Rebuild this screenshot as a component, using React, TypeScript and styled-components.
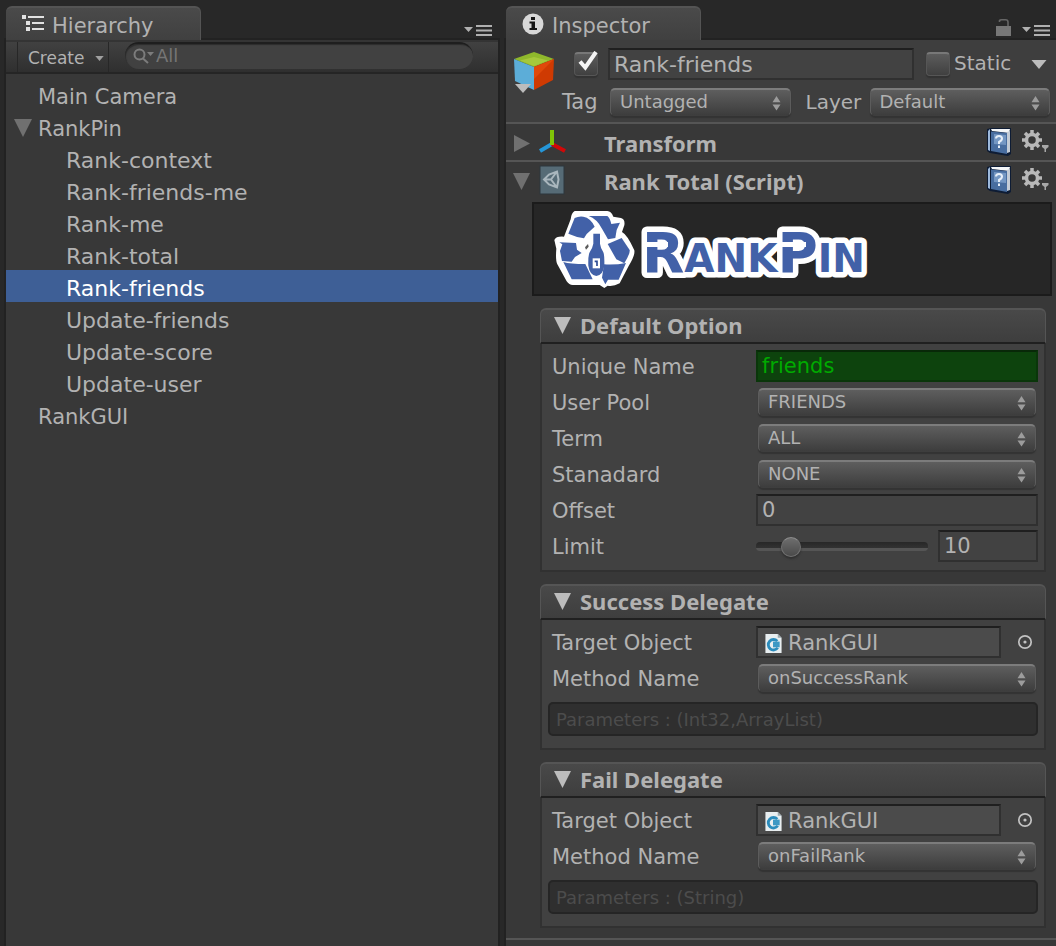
import React, { useState } from "react";
import styled, { createGlobalStyle, css } from "styled-components";

const GlobalStyle = createGlobalStyle`
  * { box-sizing: border-box; }
  body { margin: 0; background: #282828; }
  body, button, input, select {
    font-family: "DejaVu Sans", sans-serif;
    color: #b2b2b2;
  }
  button, input, select { margin: 0; padding: 0; border: 0; outline: 0; background: none; }
  svg { display: block; flex: none; }
`;

/* ---------- window and panes ---------- */

const Window = styled.div`
  display: grid;
  grid-template-columns: minmax(0, 492fr) minmax(0, 550fr);
  gap: 8px;
  min-height: 100vh;
  padding-left: 6px;
  background: #282828;
`;

const Pane = styled.section`
  display: flex;
  flex-direction: column;
  min-width: 0;
`;

const PaneBody = styled.div`
  flex: 1;
  background: #383838;
  box-shadow: 0 0 0 2px #222222;
`;

const TabBar = styled.div`
  display: flex;
  align-items: flex-end;
  justify-content: space-between;
  height: 40px;
  position: relative;
`;

const Tab = styled.button`
  display: flex;
  align-items: center;
  gap: 8px;
  width: 195px;
  height: 34px;
  padding: 4px 16px 0;
  border-top: 2px solid #545454;
  border-right: 1px solid #545454;
  border-radius: 6px 6px 0 0;
  background: linear-gradient(#4a4a4a, #404040);
  font-size: 21px;
  line-height: 24px;
  & > svg { margin-bottom: 4px; }
`;

const PaneMenu = styled.div`
  display: flex;
  align-items: flex-end;
  gap: 11px;
  padding: 0 6px 3px 0;
`;

const IconButton = styled.button`
  display: flex;
  align-items: center;
`;

/* ---------- hierarchy ---------- */

const Toolbar = styled.div`
  display: flex;
  height: 34px;
  padding: 0 25px 0 11px;
  gap: 16px;
  border-top: 2px solid #343434;
  border-bottom: 2px solid #252525;
  background: linear-gradient(#414141, #2f2f2f);
`;

const CreateButton = styled.button`
  display: flex;
  align-items: center;
  gap: 10px;
  width: 92px;
  padding: 2px 0 0 10px;
  border: solid #272727;
  border-width: 0 1px;
  font-size: 17px;
`;

const SearchBox = styled.label`
  display: flex;
  flex: 1;
  align-items: center;
  gap: 2px;
  height: 27px;
  min-width: 0;
  padding: 0 0 2px 8px;
  border-radius: 14px;
  border-top: 2px solid #1e1e1e;
  background: #414141;
  box-shadow: inset 1px 1px 1px #2c2c2c;
`;

const SearchInput = styled.input`
  flex: 1;
  min-width: 0;
  font-size: 18px;
  &::placeholder { color: #757575; opacity: 1; }
`;

const Tree = styled.ul`
  list-style: none;
  margin: 0;
  padding: 4px 0 0;
`;

const TreeRow = styled.button<{ $child?: boolean; $selected?: boolean }>`
  display: flex;
  align-items: center;
  gap: 6px;
  width: 100%;
  height: 32px;
  padding: 6px 0 0 ${(p) => (p.$child ? 60 : 8)}px;
  font-size: ${(p) => (p.$child ? 22 : 21)}px;
  line-height: 26px;
  white-space: nowrap;
  ${(p) => p.$selected && css`background: #3e5f96; color: #ffffff;`}
`;

const TreeFold = styled.span`
  width: 18px;
  padding-bottom: 3px;
`;

/* ---------- form controls ---------- */

const fieldFrame = css`
  height: 32px;
  border: 2px solid #303030;
  border-top-color: #1f1f1f;
  background: #424242;
`;

const TextField = styled.input<{ $tone?: "valid" }>`
  ${fieldFrame}
  width: 100%;
  min-width: 0;
  padding: 0 4px;
  font-size: 21px;
  ${(p) =>
    p.$tone === "valid" &&
    css`
      border-color: #0a360a;
      border-top-color: #082808;
      background: #0d430d;
      color: #00aa00;
    `}
`;

const NameField = styled(TextField)`
  flex: 1;
  width: auto;
  font-size: 22px;
`;

const NumberField = styled(TextField)`
  width: 100px;
  flex: none;
`;

const SelectFrame = styled.span`
  position: relative;
  display: block;
  flex: 1;
  min-width: 0;
  margin: 0 2px;
  & > svg { position: absolute; right: 10px; top: 8px; pointer-events: none; }
`;

const SelectBox = styled.select`
  appearance: none;
  display: block;
  width: 100%;
  height: 28px;
  padding: 0 28px 2px 9px;
  border: 1px solid #5c5c5c;
  border-top: 2px solid #7c7c7c;
  border-bottom-color: #3e3e3e;
  border-radius: 5px;
  background: linear-gradient(#5e5e5e, #3d3d3d);
  box-shadow: 0 2px 1px #333333;
  font-size: 18px;
`;

const CheckFrame = styled.span`
  position: relative;
  display: block;
  width: 24px;
  height: 24px;
  flex: none;
  & > svg { position: absolute; left: 3px; top: -1px; pointer-events: none; }
`;

const CheckInput = styled.input`
  appearance: none;
  display: block;
  width: 24px;
  height: 24px;
  border: 1px solid #565656;
  border-top: 2px solid #787878;
  border-radius: 4px;
  background: linear-gradient(#5c5c5c, #404040);
  box-shadow: 0 2px 1px #333333;
`;

const Slider = styled.input`
  appearance: none;
  flex: 1;
  min-width: 0;
  height: 24px;
  &::-webkit-slider-runnable-track {
    height: 9px;
    border-radius: 4px;
    background: linear-gradient(#272727, #323232 65%, #555555 66%);
  }
  &::-webkit-slider-thumb {
    appearance: none;
    width: 20px;
    height: 20px;
    margin-top: -5px;
    border: 1px solid #707070;
    border-top-color: #8c8c8c;
    border-radius: 50%;
    background: linear-gradient(#6e6e6e, #4a4a4a);
    box-shadow: 0 2px 2px #303030;
  }
`;

function Select({ id, options, label }: { id?: string; options: string[]; label?: string }) {
  return (
    <SelectFrame>
      <SelectBox id={id} aria-label={label}>
        {options.map((o) => (
          <option key={o}>{o}</option>
        ))}
      </SelectBox>
      <svg width="9" height="15" viewBox="0 0 9 15" fill="#9c9c9c">
        <path d="M4.500 0 8.500 6.300h-8zM4.500 14.500.5 8.500h8z" />
      </svg>
    </SelectFrame>
  );
}

function Check({ id, defaultChecked }: { id: string; defaultChecked?: boolean }) {
  const [on, setOn] = useState(!!defaultChecked);
  return (
    <CheckFrame>
      <CheckInput
        id={id}
        type="checkbox"
        aria-label={id}
        checked={on}
        onChange={(e) => setOn(e.target.checked)}
      />
      {on && (
        <svg width="22" height="22" viewBox="0 0 22 22" fill="none" stroke="#f4f4f4">
          <path d="M3 10.500 8.300 16.500 19 1" strokeWidth="4" />
        </svg>
      )}
    </CheckFrame>
  );
}

/* ---------- inspector ---------- */

const ObjectHeader = styled.header`
  display: flex;
  height: 84px;
  padding: 8px 6px 0 7px;
  border-bottom: 2px solid #555555;
  background: #3e3e3e;
`;

const CubeSlot = styled.div`
  width: 49px;
  padding-top: 4px;
`;

const HeaderRows = styled.div`
  flex: 1;
  min-width: 0;
  display: flex;
  flex-direction: column;
  gap: 7px;
`;

const NameRow = styled.div`
  display: flex;
  align-items: center;
  height: 32px;
  padding-left: 12px;
  gap: 10px;
`;

const StaticGroup = styled.div`
  display: flex;
  align-items: center;
  gap: 4px;
  padding: 0 3px 0 2px;
  font-size: 20px;
`;

const StaticLabel = styled.label`
  width: 73px;
  padding-bottom: 2px;
`;

const TagRow = styled.div`
  display: flex;
  align-items: center;
  height: 30px;
  & > ${SelectFrame} { margin: 0; }
`;

const TagLabel = styled.label<{ $width: number }>`
  width: ${(p) => p.$width}px;
  font-size: 21px;
  line-height: 28px;
`;

const LayerLabel = styled(TagLabel)`
  margin-left: 15px;
  font-size: 20px;
`;

const ComponentBar = styled.div<{ $ruled?: boolean }>`
  display: flex;
  align-items: center;
  height: ${(p) => (p.$ruled ? 38 : 36)}px;
  padding: 0 7px;
  border-bottom: ${(p) => (p.$ruled ? "2px solid #555555" : "0")};
`;

const FoldSlot = styled(IconButton)`
  width: 26px;
  padding-top: 2px;
`;

const ComponentIcon = styled.span`
  width: 65px;
`;

const ComponentTitle = styled.h2`
  flex: 1;
  margin: 0;
  padding-top: 2px;
  font: bold 22px/30px "Noto Sans", sans-serif;
`;

const ComponentTools = styled.div`
  display: flex;
  align-items: center;
  gap: 10px;
`;

const Banner = styled.div`
  height: 94px;
  margin: 4px 4px 12px 26px;
  border: 2px solid #1b1b1b;
  background: #262626;
  overflow: hidden;
`;

const Group = styled.section`
  margin: 0 10px 12px 34px;
`;

const GroupHead = styled.button`
  display: flex;
  align-items: center;
  gap: 9px;
  width: 100%;
  height: 36px;
  padding: 0 13px 2px;
  border: solid #555555;
  border-width: 2px 1px;
  border-bottom-color: #202020;
  border-radius: 6px 6px 0 0;
  background: linear-gradient(#494949, #3e3e3e);
  font: bold 22px/30px "Noto Sans", sans-serif;
`;

const GroupBody = styled.div`
  padding: 4px 6px 6px 10px;
  border: solid #313131;
  border-width: 0 2px 2px;
  background: #414141;
`;

const Row = styled.div`
  display: grid;
  grid-template-columns: 204px minmax(0, 1fr);
  align-items: center;
  height: 36px;
`;

const RowLabel = styled.label`
  padding-top: 2px;
  font-size: 21px;
  line-height: 30px;
  white-space: nowrap;
`;

const RowValue = styled.div`
  display: flex;
  align-items: center;
  gap: 10px;
  min-width: 0;
`;

const ObjectField = styled.button`
  ${fieldFrame}
  display: flex;
  align-items: center;
  gap: 6px;
  flex: 1;
  padding: 2px 7px 0;
  background: #4b4b4b;
  font-size: 21px;
`;

const PickButton = styled(IconButton)`
  width: 27px;
  padding-left: 6px;
`;

const Signature = styled.div`
  height: 34px;
  margin: 6px 0 6px -4px;
  padding: 0 6px;
  border: 2px solid #252525;
  border-radius: 5px;
  background: #2f2f2f;
  color: #4c4c4c;
  font-size: 18px;
  line-height: 31px;
`;

const Rule = styled.hr`
  margin: -2px 0 0;
  border: 0;
  border-top: 2px solid #555555;
`;

/* ---------- icons ---------- */

const Triangle = ({ size = 17, color = "#707070", right = false }) => (
  <svg width={size} height={size} viewBox="0 0 17 17" fill={color}>
    <path d={right ? "M1 0 17 8.500 1 17z" : "M0 0h17L8.500 17z"} />
  </svg>
);

const SmallArrow = ({ width = 9, height = 5, color = "#a0a0a0" }) => (
  <svg width={width} height={height} viewBox="0 0 10 6" fill={color}>
    <path d="M0 0h10L5 6z" />
  </svg>
);

const MenuIcon = () => (
  <svg width="28" height="12" viewBox="0 0 28 12" fill="#b0b0b0">
    <path d="M0 2h9L4.500 7zM12 0h16v2H12zM12 4.500h16v2H12zM12 9h16v2H12z" />
  </svg>
);

const LockIcon = () => (
  <svg width="15" height="18" viewBox="0 0 15 18">
    <path d="M0 7h15v10H0z" fill="#777777" />
    <path d="M3.500 3V1.500Q4 .8 5.500.8h4Q12 .8 12 3v4" fill="none" stroke="#666666" strokeWidth="1.600" />
  </svg>
);

const HierarchyIcon = () => (
  <svg width="22" height="18" viewBox="0 0 22 18" fill="#e2e2e2">
    <path d="M0 0h4v4H0zM6 1h16v2H6zM4 6h4v4H4zM10 7h12v2H10zM4 12h4v4H4zM10 13h12v2H10z" />
  </svg>
);

const InfoIcon = () => (
  <svg width="22" height="22" viewBox="0 0 22 22">
    <circle cx="11" cy="11" r="10.500" fill="#d8d8d8" />
    <path d="M9 4h4v3H9zM7.500 8.500H13V15h2v2H7.500v-2H9.500v-4.500h-2z" fill="#161616" />
  </svg>
);

const SearchIcon = () => (
  <svg width="21" height="16" viewBox="0 0 21 16" fill="none" stroke="#7c7c7c" strokeWidth="2">
    <circle cx="6.500" cy="6.500" r="5" />
    <path d="m10 10.500 5 4.500" />
    <path d="M14 4h7l-3.500 4z" fill="#7c7c7c" stroke="none" />
  </svg>
);

const CubeIcon = () => (
  <svg width="42" height="44" viewBox="0 0 42 44">
    <path d="M21 0 41 7 21 15 1 7z" fill="#8fb82c" />
    <path d="M21 5 35 8.500 21 14 7 8.500z" fill="#a5c83c" />
    <path d="M1 7 21 15v23L2 29z" fill="#5cadd8" />
    <path d="M41 7 21 15v23l19-10z" fill="#cf3a02" />
    <path d="M41 7 21 15v12z" fill="#e0480a" />
    <path d="M2 32h16l-8 9z" fill="#bcbcbc" />
  </svg>
);

const AxesIcon = () => (
  <svg width="28" height="26" viewBox="0 0 28 26" fill="none" strokeWidth="4">
    <path d="M13 15 1 22" stroke="#2596d8" />
    <path d="m13 15 13 7" stroke="#d00808" />
    <path d="M13 1v15" stroke="#80c408" />
  </svg>
);

const ScriptIcon = () => (
  <svg width="26" height="30" viewBox="0 0 26 30">
    <rect x="1" y="1" width="24" height="28" fill="#566b76" stroke="#2c363c" />
    <g fill="none" stroke="#a9b6bd" strokeWidth="2">
      <path d="m5 14.500 5-5 8-3 1.500 8L18 22.500l-8-3zM5 14.500h7M12 14.500l6-8M12 14.500l6 8" />
    </g>
  </svg>
);

const BookIcon = () => (
  <svg width="26" height="28" viewBox="0 0 26 28">
    <path d="M1 1 5 0h20v26l-3 2-18-3-3-2z" fill="#0e1c34" />
    <path d="M5 1h19l-1 4-17-2z" fill="#f4f6f8" />
    <path d="m21 4 3-1v21l-3 1z" fill="#c4ccd6" />
    <path d="M2 3 4 1v22l-2-1z" fill="#9db9dc" />
    <path d="M5 3.500 21 5v21L5 23z" fill="#486d9f" />
    <path d="M8 6 20 7v10L8 16z" fill="#7497c3" />
    <path d="M10 10.500Q10 8 13 8t3 2.500q0 2-3 3.500v2M13 17.500v2.500" fill="none" stroke="#e6eef8" strokeWidth="2" />
  </svg>
);

const GearIcon = () => (
  <svg width="27" height="24" viewBox="0 0 27 24">
    <g fill="none" stroke="#b8b8b8">
      <circle cx="10" cy="10" r="5.500" strokeWidth="3.500" />
      <path
        d="M10 0v4M10 16v4M0 10h4M16 10h4M3 3l3 3M14 14l3 3M3 17l3-3M14 6l3-3"
        strokeWidth="3.500"
      />
    </g>
    <path d="M20 15h6.500v2L24 19v3h-1.500v-3L20 17z" fill="#a8a8a8" />
  </svg>
);

const CSharpIcon = () => (
  <svg width="17" height="19" viewBox="0 0 17 20">
    <path d="M0 0h13l4 4v16H0z" fill="#e8eef0" />
    <path d="M12.500 7.500A5.500 5.500 0 1 0 13 14.500" fill="none" stroke="#2b8cbc" strokeWidth="3" />
    <path d="M8 8h7v6H8z" fill="#3c98c4" />
    <path d="M13 0v4h4z" fill="#9aa8ae" />
  </svg>
);

const PickIcon = () => (
  <svg width="16" height="16" viewBox="0 0 16 16">
    <circle cx="8" cy="8" r="6.200" fill="none" stroke="#c2c2c2" strokeWidth="1.700" />
    <circle cx="8" cy="8" r="1.600" fill="#c2c2c2" />
  </svg>
);

const Logo = () => (
  <svg width="350" height="90" viewBox="0 0 350 90" role="img" aria-label="RankPin">
    <defs>
      <text
        id="wordmark"
        x="108"
        y="68"
        fontFamily="DejaVu Sans, sans-serif"
        fontWeight="bold"
        fontSize="55"
        fontVariant="small-caps"
      >
        RankPin
      </text>
    </defs>
    <g transform="translate(6 -4) scale(.3333)">
      <path
        d="M104 33H202Q214 34 220 50L243 54Q256 58 253 76L246 96Q262 104 283 151Q286 166 266 198L239 250Q220 260 203 257L193 264 179 255H100Q88 256 80 244L52 193Q46 180 49 146L43 120Q48 108 72 110L92 58Q94 38 104 33z"
        fill="#ffffff"
      />
      <g fill="#4261a8">
        <path d="M104 54q12-6 26-4 22 4 34 30l-24 22-8 13q-22-3-47-14z" />
        <path d="M146 48h56q8 6 12 24l26-4-10 22-4 24-22 4-18-32q-16-30-40-38z" />
        <path d="m203 132 42-18 24 36q2 10-16 40l-24-12z" />
        <path d="M192 193q36 2 66-4l-22 50h-32l-8 14-10-20z" />
        <path d="M70 186q20 6 66 6l22 46H95z" />
        <path d="m58 127 50 2 3 20 14 10-20 12-10 14-29-2-6-30 7-20z" />
        <path d="M160 101h20v30q2 14 10 26 4 9 3 40-4 28-24 31-20-3-24-31-1-31 4-40 9-14 11-26z" />
      </g>
      <path d="M158 175h22v30h-22z" fill="#ffffff" />
      <path d="M164 184h7v14" fill="none" stroke="#2c4b94" strokeWidth="5" />
      <path d="m135 142 9-10 2 8-8 9z" fill="#5a5a5a" />
    </g>
    <use href="#wordmark" fill="#ffffff" stroke="#ffffff" strokeWidth="11" strokeLinejoin="round" />
    <use href="#wordmark" fill="#4261a8" />
    <path d="M110 38h24v5h-24zM248 38h24v5h-24z" fill="#ffffff" />
  </svg>
);

/* ---------- page ---------- */

const nodes = [
  { name: "Main Camera" },
  { name: "RankPin", open: true },
  { name: "Rank-context", child: true },
  { name: "Rank-friends-me", child: true },
  { name: "Rank-me", child: true },
  { name: "Rank-total", child: true },
  { name: "Rank-friends", child: true },
  { name: "Update-friends", child: true },
  { name: "Update-score", child: true },
  { name: "Update-user", child: true },
  { name: "RankGUI" },
];

function Hierarchy() {
  const [selected, setSelected] = useState("Rank-friends");
  return (
    <Pane>
      <TabBar>
        <Tab>
          <HierarchyIcon />
          Hierarchy
        </Tab>
        <PaneMenu>
          <IconButton aria-label="Hierarchy menu">
            <MenuIcon />
          </IconButton>
        </PaneMenu>
      </TabBar>
      <PaneBody>
        <Toolbar>
          <CreateButton>
            Create
            <SmallArrow />
          </CreateButton>
          <SearchBox>
            <SearchIcon />
            <SearchInput placeholder="All" aria-label="Search" />
          </SearchBox>
        </Toolbar>
        <Tree>
          {nodes.map((n) => (
            <li key={n.name}>
              <TreeRow
                $child={n.child}
                $selected={n.name === selected}
                onClick={() => setSelected(n.name)}
              >
                {!n.child && <TreeFold>{n.open && <Triangle size={18} />}</TreeFold>}
                {n.name}
              </TreeRow>
            </li>
          ))}
        </Tree>
      </PaneBody>
    </Pane>
  );
}

function ComponentHeader({
  title,
  icon,
  open,
}: {
  title: string;
  icon: React.ReactNode;
  open?: boolean;
}) {
  return (
    <ComponentBar $ruled={!open}>
      <FoldSlot aria-label={`Fold ${title}`}>
        <Triangle right={!open} />
      </FoldSlot>
      <ComponentIcon>{icon}</ComponentIcon>
      <ComponentTitle>{title}</ComponentTitle>
      <ComponentTools>
        <IconButton aria-label="Help">
          <BookIcon />
        </IconButton>
        <IconButton aria-label="Settings">
          <GearIcon />
        </IconButton>
      </ComponentTools>
    </ComponentBar>
  );
}

function OptionGroup({ title, children }: { title: string; children: React.ReactNode }) {
  const [open, setOpen] = useState(true);
  return (
    <Group>
      <GroupHead aria-expanded={open} onClick={() => setOpen(!open)}>
        <Triangle color="#bcbcbc" right={!open} />
        {title}
      </GroupHead>
      {open && <GroupBody>{children}</GroupBody>}
    </Group>
  );
}

function Field({ id, label, children }: { id: string; label: string; children: React.ReactNode }) {
  return (
    <Row>
      <RowLabel htmlFor={id}>{label}</RowLabel>
      <RowValue>{children}</RowValue>
    </Row>
  );
}

function Delegate({
  id,
  title,
  method,
  signature,
}: {
  id: string;
  title: string;
  method: string;
  signature: string;
}) {
  return (
    <OptionGroup title={title}>
      <Field id={`${id}-target`} label="Target Object">
        <ObjectField id={`${id}-target`}>
          <CSharpIcon />
          RankGUI
        </ObjectField>
        <PickButton aria-label="Pick object">
          <PickIcon />
        </PickButton>
      </Field>
      <Field id={`${id}-method`} label="Method Name">
        <Select id={`${id}-method`} options={[method]} />
      </Field>
      <Signature>{signature}</Signature>
    </OptionGroup>
  );
}

function Inspector() {
  const [limit, setLimit] = useState("10");
  return (
    <Pane>
      <TabBar>
        <Tab>
          <InfoIcon />
          Inspector
        </Tab>
        <PaneMenu>
          <IconButton aria-label="Lock">
            <LockIcon />
          </IconButton>
          <IconButton aria-label="Inspector menu">
            <MenuIcon />
          </IconButton>
        </PaneMenu>
      </TabBar>
      <PaneBody>
        <ObjectHeader>
          <CubeSlot>
            <CubeIcon />
          </CubeSlot>
          <HeaderRows>
            <NameRow>
              <Check id="active" defaultChecked />
              <NameField aria-label="Name" defaultValue="Rank-friends" />
              <StaticGroup>
                <Check id="static" />
                <StaticLabel htmlFor="static">Static</StaticLabel>
                <IconButton aria-label="Static options">
                  <SmallArrow width={16} height={9} color="#bcbcbc" />
                </IconButton>
              </StaticGroup>
            </NameRow>
            <TagRow>
              <TagLabel htmlFor="tag" $width={48}>
                Tag
              </TagLabel>
              <Select id="tag" options={["Untagged"]} />
              <LayerLabel htmlFor="layer" $width={64}>
                Layer
              </LayerLabel>
              <Select id="layer" options={["Default"]} />
            </TagRow>
          </HeaderRows>
        </ObjectHeader>
        <ComponentHeader title="Transform" icon={<AxesIcon />} />
        <ComponentHeader title="Rank Total (Script)" icon={<ScriptIcon />} open />
        <Banner>
          <Logo />
        </Banner>
        <OptionGroup title="Default Option">
          <Field id="unique" label="Unique Name">
            <TextField id="unique" $tone="valid" defaultValue="friends" />
          </Field>
          <Field id="pool" label="User Pool">
            <Select id="pool" options={["FRIENDS"]} />
          </Field>
          <Field id="term" label="Term">
            <Select id="term" options={["ALL"]} />
          </Field>
          <Field id="standard" label="Stanadard">
            <Select id="standard" options={["NONE"]} />
          </Field>
          <Field id="offset" label="Offset">
            <TextField id="offset" defaultValue="0" />
          </Field>
          <Field id="limit" label="Limit">
            <Slider
              id="limit"
              type="range"
              min="0"
              max="60"
              value={limit}
              onChange={(e) => setLimit(e.target.value)}
            />
            <NumberField
              aria-label="Limit value"
              value={limit}
              onChange={(e) => setLimit(e.target.value)}
            />
          </Field>
        </OptionGroup>
        <Delegate
          id="success"
          title="Success Delegate"
          method="onSuccessRank"
          signature="Parameters : (Int32,ArrayList)"
        />
        <Delegate id="fail" title="Fail Delegate" method="onFailRank" signature="Parameters : (String)" />
        <Rule />
      </PaneBody>
    </Pane>
  );
}

export default function App() {
  return (
    <>
      <GlobalStyle />
      <Window>
        <Hierarchy />
        <Inspector />
      </Window>
    </>
  );
}
